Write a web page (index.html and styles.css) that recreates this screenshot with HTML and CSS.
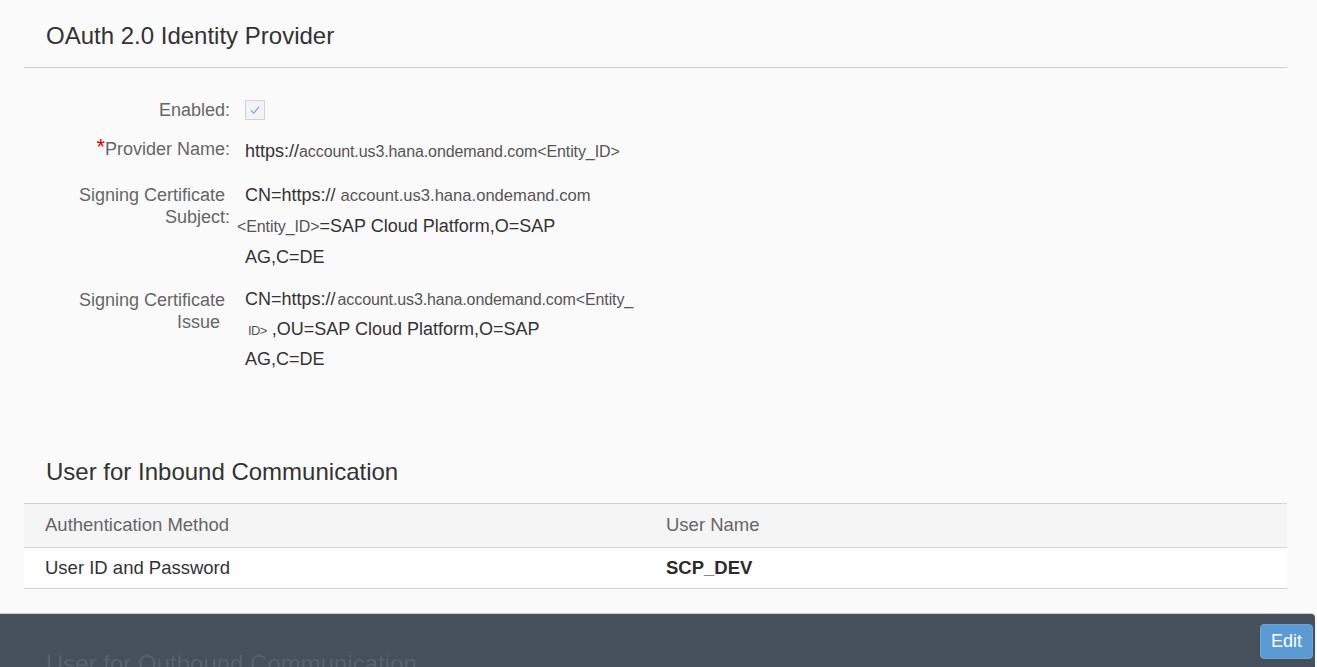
FILE: index.html
```html
<!DOCTYPE html>
<html lang="en">
<head>
<meta charset="utf-8">
<title>OAuth 2.0 Identity Provider</title>
<link rel="stylesheet" href="styles.css">
</head>
<body>
<main class="page">
  <section class="panel">
    <header class="panel-header">
      <h2 class="section-title">OAuth 2.0 Identity Provider</h2>
    </header>
    <div class="form">
      <div class="form-row">
        <div class="label">Enabled:</div>
        <div class="value">
          <span class="checkbox">
            <svg width="12" height="12" viewBox="0 0 12 12"><polyline points="2,6.5 4.8,9.2 10,2.8" fill="none" stroke="#7aa3d4" stroke-width="1.1"/></svg>
          </span>
        </div>
      </div>
      <div class="form-row">
        <div class="label"><span class="req">*</span>Provider Name:</div>
        <div class="value value-inline">https://<span class="paste">account.us3.hana.ondemand.com&lt;Entity_ID&gt;</span></div>
      </div>
      <div class="form-row">
        <div class="label">Signing Certificate&nbsp;<br>Subject:</div>
        <div class="value">
          <div class="line">CN=https:// <span class="paste paste-lg">account.us3.hana.ondemand.com</span></div>
          <div class="line line-out"><span class="paste">&lt;Entity_ID&gt;</span>=SAP Cloud Platform,O=SAP</div>
          <div class="line">AG,C=DE</div>
        </div>
      </div>
      <div class="form-row">
        <div class="label">Signing Certificate&nbsp;<br>Issue&nbsp;&nbsp;</div>
        <div class="value value-tight">
          <div class="line">CN=https://<span class="paste paste-gap">account.us3.hana.ondemand.com&lt;Entity_</span></div>
          <div class="line line-in"><span class="paste paste-sm">ID&gt;</span> ,OU=SAP Cloud Platform,O=SAP</div>
          <div class="line">AG,C=DE</div>
        </div>
      </div>
    </div>
  </section>

  <section class="panel inbound">
    <h2 class="section-title">User for Inbound Communication</h2>
    <div class="table">
      <div class="thead">
        <div class="cell">Authentication Method</div>
        <div class="cell">User Name</div>
      </div>
      <div class="trow">
        <div class="cell">User ID and Password</div>
        <div class="cell strong">SCP_DEV</div>
      </div>
    </div>
  </section>

  <section class="panel outbound">
    <h2 class="section-title">User for Outbound Communication</h2>
  </section>
</main>

<footer class="toolbar">
  <button class="btn-edit" type="button">Edit</button>
</footer>
</body>
</html>
```

FILE: styles.css
```css
html, body {
  margin: 0;
  padding: 0;
  height: 100%;
  overflow: hidden;
}

body {
  background: #fafafa;
  font-family: "Liberation Sans", Arial, sans-serif;
  color: #333;
}

.page {
  padding: 0 30px 0 24px;
}

.section-title {
  margin: 0;
  padding-left: 22px;
  font-size: 24px;
  line-height: 30px;
  font-weight: normal;
  color: #333;
}

.panel-header {
  padding-top: 21px;
  padding-bottom: 16px;
  border-bottom: 1px solid #cfcfcf;
}

/* form */
.form {
  margin-top: 27px;
  display: flex;
  flex-direction: column;
  gap: 13px;
}

.form-row {
  display: grid;
  grid-template-columns: 206px 1fr;
  column-gap: 15px;
}

.label {
  text-align: right;
  font-size: 18px;
  line-height: 22px;
  padding-top: 4px;
  color: #666;
}

.req {
  color: #e00000;
  font-size: 22px;
  line-height: 0;
  position: relative;
  top: -1px;
}

.value {
  font-size: 18px;
  line-height: 30px;
  color: #333;
  display: flex;
  flex-direction: column;
  align-items: flex-start;
}

.value-inline {
  display: block;
  padding-top: 2px;
}

.value-tight {
  line-height: 28.5px;
}

.value .line {
  white-space: nowrap;
}

.line-out {
  margin-left: -8px;
}

.line-in {
  margin-left: 3px;
}

.paste {
  font-size: 16px;
  color: #555;
  letter-spacing: -0.1px;
}

.paste-lg {
  font-size: 16.6px;
  letter-spacing: 0;
}

.paste-gap {
  margin-left: 2px;
}

.paste-sm {
  font-size: 13px;
  letter-spacing: -0.6px;
}

.checkbox {
  margin-top: 5px;
  width: 18px;
  height: 18px;
  border: 1px solid #d2d2d2;
  background: #f3f3f3;
  display: flex;
  align-items: center;
  justify-content: center;
  box-sizing: content-box;
}

/* inbound table */
.inbound {
  margin-top: 83px;
}

.table {
  margin-top: 16px;
  border-top: 1px solid #d3d3d3;
  font-size: 18.5px;
}

.thead,
.trow {
  display: grid;
  grid-template-columns: 621px 1fr;
}

.thead {
  background: #f5f5f5;
  color: #666;
  height: 43px;
  line-height: 42px;
  border-bottom: 1px solid #d6d6d6;
}

.trow {
  background: #ffffff;
  color: #333;
  height: 40px;
  line-height: 39px;
  border-bottom: 1px solid #d3d3d3;
}

.cell {
  padding-left: 21px;
  white-space: nowrap;
}

.strong {
  font-weight: bold;
  color: #2b2b2b;
}

/* outbound (under the toolbar) */
.outbound {
  margin-top: 60px;
  position: relative;
  z-index: 2;
}

.outbound .section-title {
  color: #58626c;
}

/* toolbar */
.toolbar {
  position: fixed;
  left: 0;
  right: 2px;
  bottom: 0;
  height: 53px;
  background: #46505a;
  border-top-right-radius: 4px;
  box-shadow: 0 -1px 0 #cfd2d5;
  display: flex;
  justify-content: flex-end;
  align-items: flex-start;
  padding: 10px 2px 0 0;
  box-sizing: border-box;
  z-index: 1;
}

.btn-edit {
  width: 53px;
  height: 35px;
  border: 1px solid #6aa5d8;
  border-radius: 4px;
  background: #5a9bd4;
  color: #ffffff;
  font-family: "Liberation Sans", Arial, sans-serif;
  font-size: 18px;
  padding: 0;
  cursor: pointer;
}
```
